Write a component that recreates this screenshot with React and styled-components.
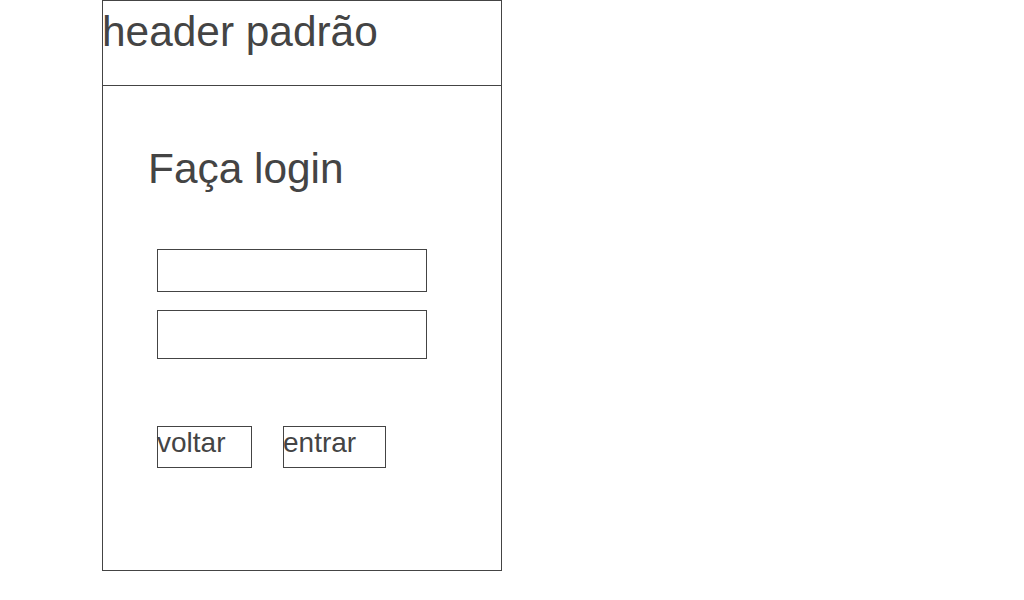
import React from 'react'
import styled, { createGlobalStyle } from 'styled-components'

const Global = createGlobalStyle`
  body { margin: 0; background: #fff; font-family: "Liberation Sans", Arial, sans-serif; color: #444; }
  * { box-sizing: border-box; }
`

const Frame = styled.div`
  margin-left: 102px;
  width: 400px;
  height: 571px;
  border: 1px solid #444;
  display: flex;
  flex-direction: column;
`

const Header = styled.header`
  height: 85px;
  flex-shrink: 0;
  border-bottom: 1px solid #444;
  padding-top: 7px;
`

const HeaderTitle = styled.h1`
  margin: 0 0 0 -1px;
  font-size: 42.4px;
  font-weight: normal;
  line-height: 48px;
`

const Body = styled.main`
  display: flex;
  flex-direction: column;
  padding-left: 45px;
`

const Title = styled.h2`
  margin: 59px 0 0;
  font-size: 42.4px;
  font-weight: normal;
  line-height: 48px;
`

const Fields = styled.form`
  display: flex;
  flex-direction: column;
  gap: 18px;
  margin: 56px 0 0 9px;
`

const Input = styled.input`
  width: 270px;
  height: ${(p) => p.h}px;
  border: 1px solid #444;
  border-radius: 0;
  padding: 0;
  outline: none;
`

const Actions = styled.div`
  display: flex;
  gap: 31px;
  margin: 67px 0 0 9px;
`

const Button = styled.button`
  width: ${(p) => p.w}px;
  height: 42px;
  border: 1px solid #444;
  background: #fff;
  padding: 0;
  text-indent: -1px;
  font-family: "Liberation Sans", Arial, sans-serif;
  font-size: 28px;
  line-height: 32px;
  color: #444;
  text-align: left;
  display: flex;
  align-items: flex-start;
  cursor: pointer;
`

function App() {
  return (
    <>
      <Global />
      <Frame>
        <Header>
          <HeaderTitle>header padrão</HeaderTitle>
        </Header>
        <Body>
          <Title>Faça login</Title>
          <Fields>
            <Input h={43} type="email" />
            <Input h={49} type="password" />
          </Fields>
          <Actions>
            <Button w={95}>voltar</Button>
            <Button w={103}>entrar</Button>
          </Actions>
        </Body>
      </Frame>
    </>
  )
}

export default App
